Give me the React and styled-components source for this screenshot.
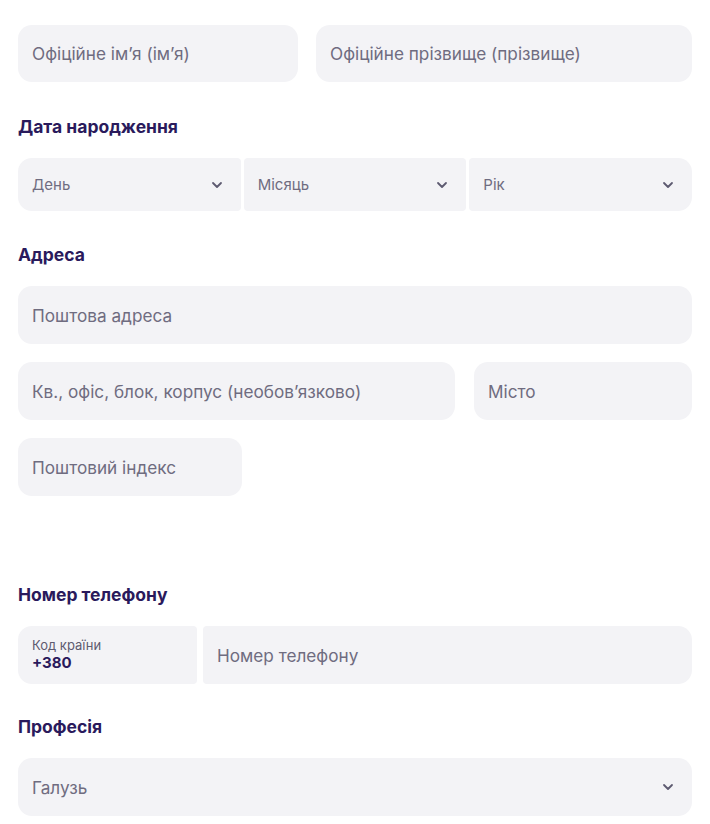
import React from 'react';
import styled, { createGlobalStyle } from 'styled-components';

const GlobalStyle = createGlobalStyle`
    body {
        margin: 0;
        background: #ffffff;
        font-family: Inter, "Noto Sans", sans-serif;
    }
`;

const Page = styled.div`
    width: 674px;
    padding: 25px 18px 8px;
`;

const Row = styled.div`
    display: grid;
    grid-template-columns: ${(p) => p.$cols || '1fr'};
    gap: ${(p) => p.$gap ?? 18}px;
    margin-bottom: ${(p) => p.$mb ?? 18}px;
`;

const Heading = styled.h3`
    margin: ${(p) => p.$mt ?? 33}px 0 19px;
    font-size: 17.5px;
    line-height: 24px;
    font-weight: 700;
    color: #2a1a5c;
`;

const Input = styled.input`
    box-sizing: border-box;
    width: 100%;
    height: ${(p) => p.$height || 58}px;
    border: none;
    outline: none;
    padding: 0 14px;
    background: #f3f3f6;
    border-radius: ${(p) => p.$radius || '14px'};
    font-family: inherit;
    font-size: 17.2px;
    color: #2a1a5c;

    &::placeholder {
        color: #6f6c80;
    }
`;

const SelectBox = styled.div`
    box-sizing: border-box;
    height: ${(p) => p.$height || 53}px;
    padding: 0 18px 0 14px;
    display: flex;
    align-items: center;
    justify-content: space-between;
    background: #f3f3f6;
    border-radius: ${(p) => p.$radius || '14px'};
    color: #6f6c80;
    font-size: ${(p) => p.$size || 15}px;
    cursor: pointer;
`;

const CodeBox = styled.div`
    box-sizing: border-box;
    height: 58px;
    padding: 0 14px;
    display: flex;
    flex-direction: column;
    justify-content: center;
    background: #f3f3f6;
    border-radius: 14px 4px 4px 14px;
`;

const CodeLabel = styled.span`
    font-size: 13px;
    line-height: 16px;
    color: #5e5b70;
`;

const CodeValue = styled.span`
    font-size: 15px;
    line-height: 20px;
    font-weight: 700;
    color: #2a1a5c;
`;

const Spacer = styled.div`
    height: 68px;
`;

const Chevron = () => (
    <svg width="12" height="8" viewBox="0 0 12 8" fill="none">
        <path
            d="M2 2l4 4 4-4"
            stroke="#5d5a70"
            strokeWidth="1.8"
            strokeLinecap="round"
            strokeLinejoin="round"
        />
    </svg>
);

const Select = ({ label, ...rest }) => (
    <SelectBox {...rest}>
        <span>{label}</span>
        <Chevron />
    </SelectBox>
);

const App = () => {
    return (
        <Page>
            <GlobalStyle />
            <Row $cols="280px 1fr" $mb={0}>
                <Input $height={57} placeholder="Офіційне ім’я (ім’я)" />
                <Input $height={57} placeholder="Офіційне прізвище (прізвище)" />
            </Row>

            <Heading>Дата народження</Heading>
            <Row $cols="1fr 1fr 1fr" $gap={3} $mb={0}>
                <Select label="День" $radius="14px 4px 4px 14px" />
                <Select label="Місяць" $radius="4px" />
                <Select label="Рік" $radius="4px 14px 14px 4px" />
            </Row>

            <Heading $mt={32}>Адреса</Heading>
            <Row>
                <Input placeholder="Поштова адреса" />
            </Row>
            <Row $cols="437px 1fr" $gap={19}>
                <Input placeholder="Кв., офіс, блок, корпус (необов’язково)" />
                <Input placeholder="Місто" />
            </Row>
            <Row $cols="224px" $mb={0}>
                <Input placeholder="Поштовий індекс" />
            </Row>

            <Spacer />

            <Heading $mt={19}>Номер телефону</Heading>
            <Row $cols="179px 1fr" $gap={6} $mb={0}>
                <CodeBox>
                    <CodeLabel>Код країни</CodeLabel>
                    <CodeValue>+380</CodeValue>
                </CodeBox>
                <Input
                    placeholder="Номер телефону"
                    $radius="4px 14px 14px 4px"
                />
            </Row>

            <Heading $mt={31}>Професія</Heading>
            <Select label="Галузь" $height={58} $size={17.2} />
        </Page>
    );
};

export default App;
